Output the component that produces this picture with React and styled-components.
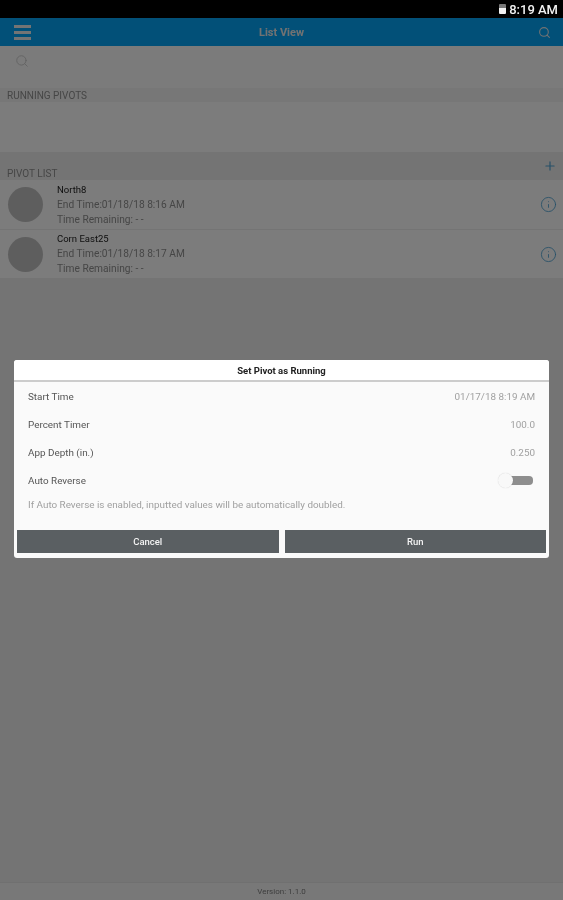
import styled, { createGlobalStyle } from 'styled-components';
import { Search, Plus, Info } from 'lucide-react';

const Global = createGlobalStyle`
  html, body { margin: 0; padding: 0; height: 100%; }
  body { font-family: "Roboto", "Liberation Sans", sans-serif; background: #e6e6e6; }
  #root { height: 900px; }
`;

const Screen = styled.div`
  position: relative;
  width: 563px;
  height: 900px;
  overflow: hidden;
  display: flex;
  flex-direction: column;
  background: #e8e8e8;
  filter: blur(0.35px);
`;

const StatusBar = styled.div`
  height: 18px;
  background: #000;
  color: #f2f2f2;
  display: flex;
  align-items: center;
  justify-content: flex-end;
  gap: 3px;
  padding: 0 5px 0 0;
  font-size: 13px;
  font-weight: 500;
  position: relative;
  z-index: 3;
`;

const Battery = styled.span`
  width: 7px;
  height: 10px;
  border-radius: 1px;
  background: linear-gradient(#777 0 45%, #f2f2f2 45%);
`;

const Header = styled.header`
  height: 28px;
  background: #04a0f0;
  color: #e4e4e4;
  display: flex;
  align-items: center;
  justify-content: space-between;
  padding: 0 12px 0 14px;
  position: relative;
`;

const Burger = styled.div`
  width: 17px;
  height: 15px;
  display: flex;
  flex-direction: column;
  justify-content: space-between;
  & span { height: 3px; background: #e8e8e8; }
`;

const Title = styled.div`
  font-size: 11px;
  font-weight: 700;
  position: absolute;
  left: 0;
  right: 0;
  text-align: center;
`;

const SearchRow = styled.div`
  height: 42px;
  padding: 7px 0 0 15px;
  box-sizing: border-box;
  background: #f6f6f6;
  color: #c4c4c4;
`;

const SectionLabel = styled.div`
  height: ${p => p.$h}px;
  box-sizing: border-box;
  padding: 0 7px 1px;
  display: flex;
  align-items: flex-end;
  justify-content: space-between;
  font-size: 10px;
  color: #8c8c8c;
  background: ${p => p.$bg};
  position: relative;
`;

const AddIcon = styled(Plus)`
  position: absolute;
  right: 6px;
  top: 7px;
  color: #4c9fd0;
`;

const EmptyList = styled.div`
  height: 50px;
  background: #f8f8f8;
`;

const Row = styled.div`
  height: ${p => p.$h}px;
  box-sizing: border-box;
  background: #f8f8f8;
  border-bottom: 1px solid #e8e8e8;
  display: flex;
  align-items: center;
  padding: 0 6px 0 8px;
`;

const Avatar = styled.div`
  width: 35px;
  height: 35px;
  border-radius: 50%;
  background: #bdbdbd;
  margin-right: 14px;
  flex: none;
`;

const RowText = styled.div`
  flex: 1;
  display: flex;
  flex-direction: column;
  gap: 3px;
  font-size: 10.2px;
  line-height: 12px;
  color: #8c8c8c;
`;

const RowName = styled.div`
  color: #222;
  font-size: 9.5px;
`;

const InfoIcon = styled(Info)`
  color: #4c9fd0;
`;

const Footer = styled.div`
  margin-top: auto;
  height: 18px;
  background: #f0f0f0;
  border-top: 1px solid #e0e0e0;
  box-sizing: border-box;
  display: flex;
  align-items: center;
  justify-content: center;
  font-size: 8px;
  color: #7c7c7c;
`;

const Overlay = styled.div`
  position: absolute;
  inset: 18px 0 0;
  z-index: 2;
  background: rgba(0, 0, 0, 0.5);
  display: flex;
  align-items: center;
  justify-content: center;
`;

const Dialog = styled.div`
  width: 535px;
  height: 198px;
  background: #fafafa;
  border-radius: 3px;
  display: flex;
  flex-direction: column;
  box-sizing: border-box;
`;

const DialogTitle = styled.div`
  height: 20px;
  background: #fff;
  border-bottom: 2px solid #ccc;
  border-radius: 3px 3px 0 0;
  display: flex;
  align-items: center;
  justify-content: center;
  font-size: 9.5px;
  font-weight: 700;
  color: #222;
`;

const Fields = styled.div`
  flex: 1;
  padding: 0 14px;
  display: flex;
  flex-direction: column;
`;

const Field = styled.div`
  height: 28px;
  display: flex;
  align-items: center;
  justify-content: space-between;
  font-size: 9.9px;
  color: #555;
  & span:last-child { color: #a0a0a0; }
`;

const Toggle = styled.div`
  position: relative;
  width: 32px;
  height: 9px;
  margin-right: 2px;
  border-radius: 4px;
  background: #8e8e8e;
  &::before {
    content: '';
    position: absolute;
    left: -3px;
    top: -3px;
    width: 15px;
    height: 15px;
    border-radius: 50%;
    background: #f8f8f8;
    box-shadow: 0 0 1px rgba(0, 0, 0, 0.2);
  }
`;

const Hint = styled.div`
  font-size: 9.9px;
  color: #a0a0a0;
  margin-top: 5px;
`;

const Actions = styled.div`
  display: flex;
  gap: 6px;
  padding: 0 3px 5px;
`;

const ActionButton = styled.div`
  flex: 1;
  height: 23px;
  background: #5a5f62;
  color: #f4f4f4;
  font-size: 9.5px;
  font-weight: 500;
  display: flex;
  align-items: center;
  justify-content: center;
`;

const pivots = [
  { name: 'North8', end: '01/18/18 8:16 AM', h: 50 },
  { name: 'Corn East25', end: '01/18/18 8:17 AM', h: 49 },
];

export default function App() {
  return (
    <Screen>
      <Global />
      <StatusBar><Battery />8:19 AM</StatusBar>
      <Header>
        <Burger><span /><span /><span /></Burger>
        <Title>List View</Title>
        <Search size={13} strokeWidth={2} />
      </Header>
      <SearchRow><Search size={14} strokeWidth={1.5} /></SearchRow>
      <SectionLabel $h={14} $bg="#eeeeee">RUNNING PIVOTS</SectionLabel>
      <EmptyList />
      <SectionLabel $h={28} $bg="#e8e8e8">
        PIVOT LIST
        <AddIcon size={14} strokeWidth={2} />
      </SectionLabel>
      {pivots.map(p => (
        <Row key={p.name} $h={p.h}>
          <Avatar />
          <RowText>
            <RowName>{p.name}</RowName>
            <div>End Time:{p.end}</div>
            <div>Time Remaining: - -</div>
          </RowText>
          <InfoIcon size={17} strokeWidth={1.2} />
        </Row>
      ))}
      <Footer>Version: 1.1.0</Footer>
      <Overlay>
        <Dialog>
          <DialogTitle>Set Pivot as Running</DialogTitle>
          <Fields>
            <Field><span>Start Time</span><span>01/17/18 8:19 AM</span></Field>
            <Field><span>Percent Timer</span><span>100.0</span></Field>
            <Field><span>App Depth (in.)</span><span>0.250</span></Field>
            <Field><span>Auto Reverse</span><Toggle /></Field>
            <Hint>If Auto Reverse is enabled, inputted values will be automatically doubled.</Hint>
          </Fields>
          <Actions>
            <ActionButton>Cancel</ActionButton>
            <ActionButton>Run</ActionButton>
          </Actions>
        </Dialog>
      </Overlay>
    </Screen>
  );
}
